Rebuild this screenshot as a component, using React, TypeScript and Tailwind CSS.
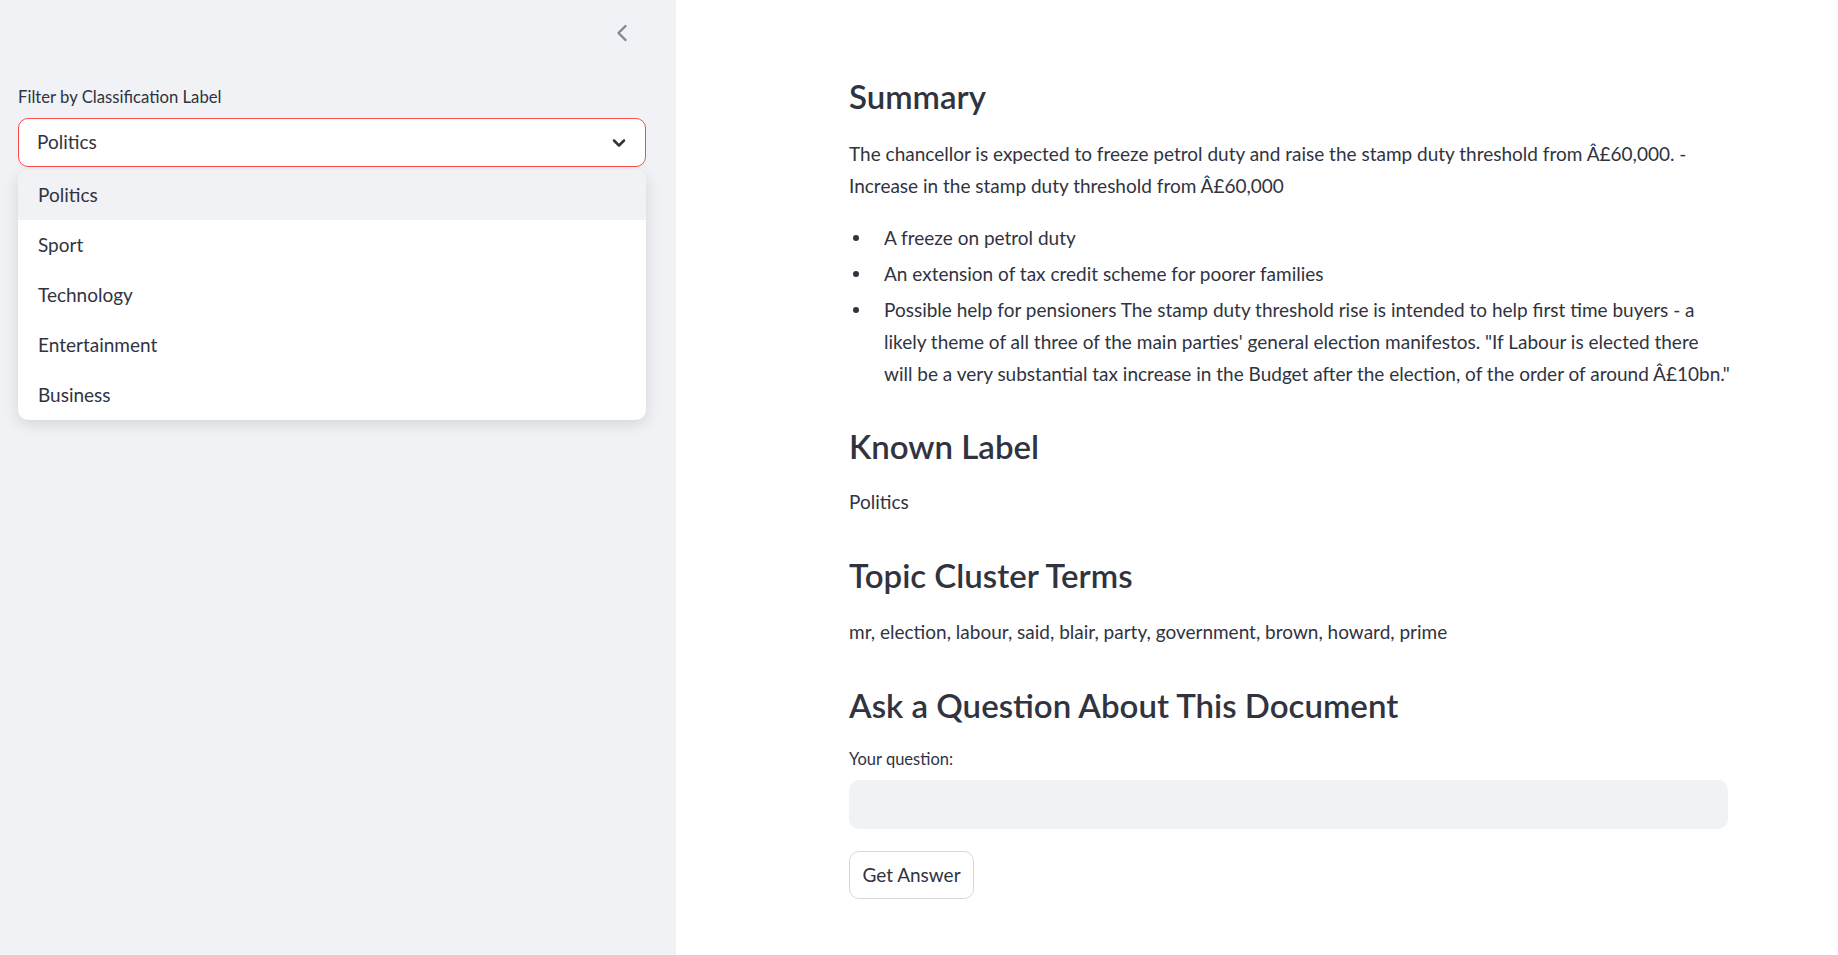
import { ChevronLeft, ChevronDown } from 'lucide-react';

const options = ['Politics', 'Sport', 'Technology', 'Entertainment', 'Business'];

function Bullet({ children }: { children: React.ReactNode }) {
  return (
    <li className="flex">
      <span className="w-[35px] shrink-0">
        <span className="ml-[4px] mt-[13px] block h-[6px] w-[6px] rounded-full bg-[#31333f]" />
      </span>
      <span className="whitespace-nowrap">{children}</span>
    </li>
  );
}

export default function App() {
  return (
    <div className="flex min-h-screen w-full font-['Lato',sans-serif] text-[#31333f]">
      {/* Sidebar */}
      <aside className="relative w-[676px] shrink-0 bg-[#f0f2f6] px-[18px]">
        <div className="flex h-[66px] w-[628px] items-center justify-end pr-[10px]">
          <ChevronLeft size={28} strokeWidth={2} className="text-[#808495]" />
        </div>
        <label className="mt-[19px] block text-[16.7px] leading-[24px]">Filter by Classification Label</label>
        <div className="mt-[9px] flex h-[49px] w-[628px] items-center justify-between rounded-[10px] border border-[#ff4b4b] bg-white pl-[18px] pr-[16px]">
          <span className="text-[19px]">Politics</span>
          <ChevronDown size={20} strokeWidth={3} className="text-[#31333f]" />
        </div>

        {/* Open dropdown menu */}
        <ul className="absolute left-[18px] top-[170px] w-[628px] overflow-hidden rounded-[10px] bg-white shadow-[0_4px_16px_rgba(0,0,0,0.12)]">
          {options.map((o, i) => (
            <li
              key={o}
              className={
                i === 0
                  ? 'flex h-[50px] items-center bg-[#f0f2f6] pl-[20px] text-[19px]'
                  : 'flex h-[50px] items-center pl-[20px] text-[19px]'
              }
            >
              {o}
            </li>
          ))}
        </ul>
      </aside>

      {/* Main content */}
      <main className="flex-1 bg-white">
        <div className="ml-[173px] w-[879px] pb-[40px] pt-[75px] text-[19px] leading-[32px]">
          <h3 className="text-[33px] font-semibold leading-[42px]">Summary</h3>
          <p className="mt-[21px] whitespace-nowrap">
            The chancellor is expected to freeze petrol duty and raise the stamp duty threshold from Â£60,000. -
            <br />
            Increase in the stamp duty threshold from Â£60,000
          </p>
          <ul className="mt-[20px] flex flex-col gap-[4px]">
            <Bullet>A freeze on petrol duty</Bullet>
            <Bullet>An extension of tax credit scheme for poorer families</Bullet>
            <Bullet>
              Possible help for pensioners The stamp duty threshold rise is intended to help first time buyers - a
              <br />
              likely theme of all three of the main parties' general election manifestos. "If Labour is elected there
              <br />
              will be a very substantial tax increase in the Budget after the election, of the order of around Â£10bn."
            </Bullet>
          </ul>

          <h3 className="mt-[35px] text-[33px] font-semibold leading-[42px]">Known Label</h3>
          <p className="mt-[19px]">Politics</p>

          <h3 className="mt-[36px] text-[33px] font-semibold leading-[42px]">Topic Cluster Terms</h3>
          <p className="mt-[20px]">mr, election, labour, said, blair, party, government, brown, howard, prime</p>

          <h3 className="mt-[36px] text-[33px] font-semibold leading-[42px]">Ask a Question About This Document</h3>
          <label className="mt-[21px] block text-[16.5px] leading-[24px]">Your question:</label>
          <div className="mt-[9px] h-[49px] w-full rounded-[10px] bg-[#f0f2f6]" />
          <button className="mt-[22px] flex h-[48px] w-[125px] items-center justify-center rounded-[10px] border border-[#d5d7dd] bg-white text-[19px]">
            Get Answer
          </button>
        </div>
      </main>
    </div>
  );
}
